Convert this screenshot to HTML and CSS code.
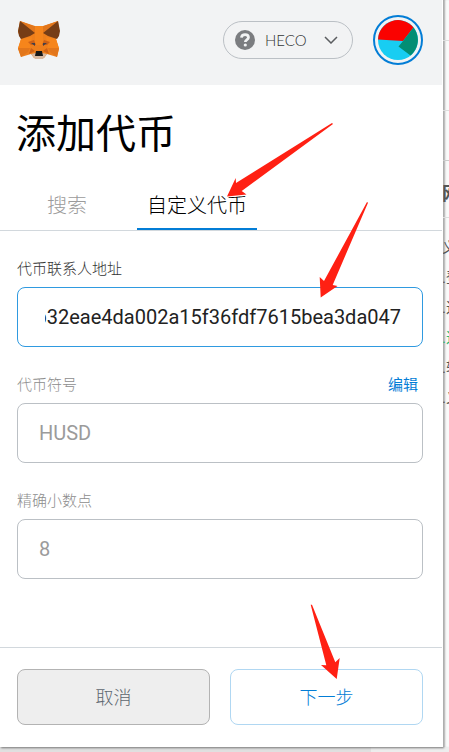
FILE: index.html
```html
<!DOCTYPE html>
<html lang="zh-CN">
<head>
<meta charset="utf-8">
<meta name="viewport" content="width=device-width, initial-scale=1">
<title>添加代币</title>
<link rel="stylesheet" href="styles.css">
</head>
<body>
<div class="desktop">
  <main class="popup">
    <header class="topbar">
      <svg class="fox" viewBox="0 0 42 40" aria-hidden="true">
        <path fill="#ee7f1c" d="M2 1 15 6H26L40 1 41 12 38 19 41 29 39 37 29 34 26 38H16L13 34 3 37 0 29 3 19 0 12Z"/>
        <path fill="#e2761b" d="M2 1 17 6V13ZM40 1 25 6V13ZM0 28H12L10 32 3 37ZM41 28H30L32 32 39 37Z"/>
        <path fill="#f6851b" d="M3 19 14 17 12 28H0ZM38 19 28 17 30 28H41ZM17 6H25V25H17Z"/>
        <path fill="#763d16" d="M2 1 17 13 12 16 3 19 1 16 0 11ZM40 1 25 13 30 16 39 19 41 16 42 11Z"/>
        <path fill="#cd6116" d="M10 22 16 20 18 25 13 25ZM32 22 26 20 24 25 29 25ZM13 28 17 31 11 34ZM29 28 25 31 31 34Z"/>
        <path fill="#43404a" d="M13 23 17 23 17 26ZM29 23 25 23 25 26Z"/>
        <path fill="#d7b8a0" d="M13 34 18 33H24L29 34 25 39H17Z"/>
        <path fill="#161616" d="M18 31H24L25 36H17Z"/>
      </svg>
      <button class="network" type="button">
        <svg class="network-icon" viewBox="0 0 20 20" aria-hidden="true">
          <circle cx="10" cy="10" r="10" fill="#7b7d80"/>
          <path d="M6.400 7.700C6.600 5.500 8.100 4.600 10.100 4.600S13.500 5.700 13.500 7.500C13.500 9.600 10.300 9.500 10.300 12" fill="none" stroke="#f2f3f4" stroke-width="2.700"/>
          <circle cx="10.300" cy="15" r="1.600" fill="#f2f3f4"/>
        </svg>
        <span>HECO</span>
        <svg class="chevron" viewBox="0 0 14 8" aria-hidden="true"><path d="M1 1 7 7 13 1" fill="none" stroke="#5b5d60" stroke-width="1.500"/></svg>
      </button>
      <button class="account" type="button" aria-label="账户">
        <svg viewBox="0 0 40 40" aria-hidden="true">
          <circle cx="20" cy="20" r="20" fill="#18cdf2"/>
          <path fill="#fa0200" d="M0 19.500A20 20 0 0 1 35.500 7.500L25 21Z"/>
          <path fill="#038e74" d="M35.500 7.500A20 20 0 0 1 32.500 35.500L20.500 26.500 25 21Z"/>
        </svg>
      </button>
    </header>

    <h1 class="title">添加代币</h1>
    <nav class="tabs">
      <button class="tab" type="button">搜索</button>
      <button class="tab tab-active" type="button">自定义代币</button>
    </nav>

    <form class="form" id="token-form">
      <div class="field field-focus">
        <div class="field-head"><label for="address">代币联系人地址</label></div>
        <input id="address" class="address" dir="rtl" type="text" value="0x0298c2b32eae4da002a15f36fdf7615bea3da047">
      </div>
      <div class="field">
        <div class="field-head"><label for="symbol">代币符号</label><a class="edit" href="#symbol">编辑</a></div>
        <input id="symbol" type="text" value="HUSD">
      </div>
      <div class="field">
        <div class="field-head"><label for="decimals">精确小数点</label></div>
        <input id="decimals" type="text" value="8">
      </div>
    </form>

    <footer class="actions">
      <button class="btn btn-cancel" type="button">取消</button>
      <button class="btn btn-next" type="submit" form="token-form">下一步</button>
    </footer>
  </main>

  <aside class="behind">
    <div class="behind-bar"></div>
    <div class="behind-nav"></div>
    <div class="behind-tools"></div>
    <div class="behind-heading">网</div>
    <ul class="behind-list">
      <li>义</li>
      <li>.登</li>
      <li>.这</li>
      <li class="green">.这</li>
      <li>.转</li>
      <li>.义</li>
    </ul>
  </aside>

  <svg class="arrows" width="449" height="752" viewBox="0 0 449 752" aria-hidden="true">
    <path d="M227 196.500 235.700 178 236 183 332 123 333 124 241.700 191 246.500 194.500Z"/>
    <path d="M320.700 297.500 319.700 277 324 281 367 202 368 202.700 332.700 285 337.500 286Z"/>
    <path d="M336.700 679 321 665 326.300 665.300 310.700 604.700 312 604.700 335.300 662.300 339.700 658Z"/>
  </svg>
</div>
</body>
</html>
```
FILE: styles.css
```css
* {
  box-sizing: border-box;
}

body {
  margin: 0;
  background: #e4e4e4;
  color: #000;
  font-family: Roboto, "Noto Sans CJK SC", sans-serif;
  font-weight: 300;
}

button,
input {
  margin: 0;
  font: inherit;
}

.desktop {
  position: relative;
  display: grid;
  grid-template-columns: 1fr 6px;
  min-height: 100vh;
  padding-bottom: 5px;
  overflow: hidden;
  background: linear-gradient(to right, #e0e0e0 371px, #ededed 371px);
}

.popup {
  display: flex;
  flex-direction: column;
  min-width: 0;
  padding-right: 1px;
  background: #fff;
  box-shadow: 1px 1px 2px #777;
}

.topbar {
  display: flex;
  align-items: center;
  height: 85px;
  padding: 0 19px 5px 18px;
  background: #f2f3f4;
}

.fox {
  width: 42px;
  height: 40px;
  margin-right: auto;
}

.network {
  display: flex;
  align-items: center;
  width: 130px;
  height: 38px;
  margin-right: 20px;
  padding: 0 14px 0 11px;
  border: 1px solid #bbc0c5;
  border-radius: 19px;
  background: none;
  color: #333;
  font-family: Lato, sans-serif;
  font-size: 15px;
  font-weight: 300;
}

.network-icon {
  width: 20px;
  height: 20px;
  margin-right: 10px;
}

.chevron {
  width: 14px;
  height: 8px;
  margin-left: auto;
}

.account {
  width: 50px;
  height: 50px;
  padding: 3px;
  border: 2px solid #037dd6;
  border-radius: 50%;
  background: #f2f3f4;
}

.account svg {
  display: block;
}

.title {
  margin: 0;
  padding: 20px 16px 0;
  font-size: 40px;
  font-weight: 400;
  line-height: 60px;
}

.tabs {
  display: flex;
  gap: 30px;
  margin-top: 16px;
  padding-left: 27px;
  border-bottom: 1px solid #d2d8dd;
}

.tab {
  height: 49px;
  padding: 0 10px;
  border: 0;
  border-bottom: 2px solid transparent;
  background: none;
  color: #9b9b9b;
  font-size: 20px;
}

.tab:first-child {
  width: 80px;
}

.tab-active {
  border-color: #037dd6;
  color: #000;
}

.form {
  display: flex;
  flex-direction: column;
  gap: 26px;
  padding: 26px 19px 20px 17px;
}

.field {
  color: #8d8d8d;
}

.field-focus {
  color: #333;
}

.field-head {
  display: flex;
  justify-content: space-between;
  height: 30px;
  padding-right: 5px;
  font-size: 15px;
  line-height: 24px;
}

.edit {
  color: #037dd6;
  font-weight: 400;
  text-decoration: none;
}

.field input {
  display: block;
  width: 100%;
  height: 60px;
  padding: 0 21px;
  border: 1px solid #bbc0c5;
  border-radius: 8px;
  background: #fff;
  color: #9b9b9b;
  font-size: 20px;
  font-weight: 400;
  outline: 0;
}

.field .address {
  padding-left: 27px;
  border-color: #2f9ae0;
  color: #222;
}

.actions {
  display: grid;
  grid-template-columns: 1fr 1fr;
  gap: 20px;
  margin-top: auto;
  padding: 21px 19px 22px 17px;
  border-top: 1px solid #d2d8dd;
}

.btn {
  height: 56px;
  padding: 0 0 3px;
  border: 1px solid #b0d7f2;
  border-radius: 8px;
  background: #fff;
  color: #037dd6;
  font-size: 18px;
}

.btn-cancel {
  border-color: #b3b3b3;
  background: #eee;
  color: #5d666f;
}

.behind {
  min-width: 0;
  overflow: hidden;
  background: #fafafa;
  color: #555;
  text-indent: -1px;
  box-shadow: inset 3px 0 2px -1px #aaa;
}

.behind-bar {
  height: 41px;
  border-bottom: 1px solid #ddd;
}

.behind-nav {
  height: 70px;
  border-bottom: 1px solid #ddd;
}

.behind-tools {
  height: 50px;
  border-bottom: 1px solid #ccc;
}

.behind-heading {
  height: 57px;
  padding-top: 18px;
  border-bottom: 1px solid #ddd;
  font-size: 18px;
  font-weight: 700;
  line-height: 30px;
  white-space: nowrap;
}

.behind-list {
  margin: 0;
  padding: 15px 0 0;
  list-style: none;
  font-size: 15px;
  font-weight: 400;
  line-height: 30px;
  white-space: nowrap;
}

.green {
  color: #2fb574;
}

.arrows {
  position: absolute;
  top: 0;
  left: 0;
  fill: #ff2013;
  pointer-events: none;
}
```
